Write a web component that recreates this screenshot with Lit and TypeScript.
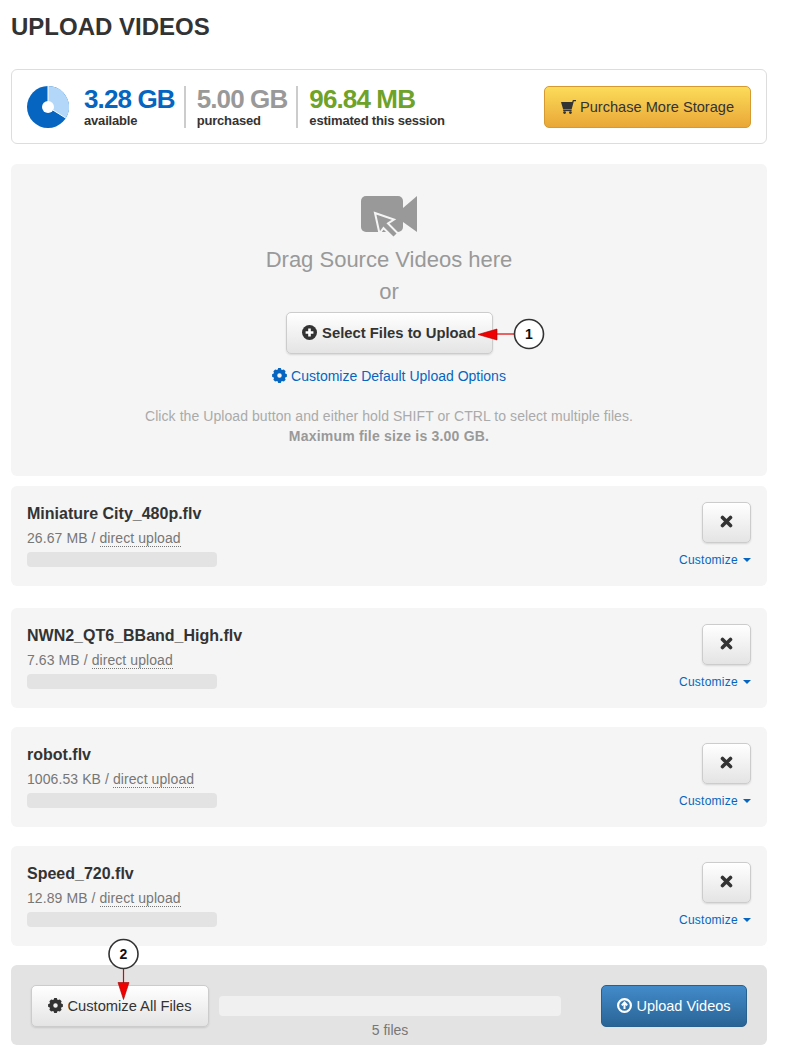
import { LitElement, html, css, svg } from "lit";
import { customElement } from "lit/decorators.js";

function gearPath(): string {
  const pts: string[] = [];
  const teeth = 8;
  for (let i = 0; i < teeth; i++) {
    const a = (i / teeth) * Math.PI * 2 - Math.PI / 2;
    const s = Math.PI / teeth;
    const p = [
      [6.3, a - s * 0.95],
      [8, a - s * 0.42],
      [8, a + s * 0.42],
      [6.3, a + s * 0.95],
    ];
    for (const [r, t] of p) {
      pts.push(`${(8 + r * Math.cos(t)).toFixed(2)} ${(8 + r * Math.sin(t)).toFixed(2)}`);
    }
  }
  return `M${pts.join("L")}Z M8 5.6A2.4 2.4 0 1 0 8 10.4A2.4 2.4 0 1 0 8 5.6Z`;
}
const GEAR = gearPath();
const gear = (cls: string) => html`<svg class=${cls} viewBox="0 0 16 16"><path fill="currentColor" fill-rule="evenodd" d=${GEAR}></path></svg>`;

const FILES = [
  { name: "Miniature City_480p.flv", size: "26.67 MB", cls: "r1" },
  { name: "NWN2_QT6_BBand_High.flv", size: "7.63 MB", cls: "r2" },
  { name: "robot.flv", size: "1006.53 KB", cls: "r2" },
  { name: "Speed_720.flv", size: "12.89 MB", cls: "r2" },
];

@customElement("app-root")
export class AppRoot extends LitElement {
  static styles = css`
    :host {
      display: block;
      position: relative;
      width: 787px;
      height: 1058px;
      box-sizing: border-box;
      padding: 0 20px 0 11px;
      background: #fff;
      font-family: "Liberation Sans", Arial, sans-serif;
      color: #333;
      overflow: hidden;
    }
    h1 {
      margin: 0;
      height: 69px;
      padding-top: 14px;
      box-sizing: border-box;
      font-size: 24px;
      line-height: 26px;
      font-weight: 700;
      color: #333;
    }
    .stats {
      height: 75px;
      box-sizing: border-box;
      border: 1px solid #ddd;
      border-radius: 6px;
      display: flex;
      align-items: center;
      padding: 0 15px;
      margin-bottom: 20px;
    }
    .donut { width: 42px; height: 42px; flex: none; margin-right: 15px; }
    .stat { display: flex; flex-direction: column; height: 42px; }
    .stat b {
      font-size: 26px;
      line-height: 27px;
      letter-spacing: -0.88px;
      font-weight: 700;
    }
    .stat span {
      font-size: 13px;
      line-height: 15px;
      font-weight: 700;
      letter-spacing: -0.18px;
      color: #333;
    }
    .sep { width: 2px; height: 42px; background: #ccc; margin: 0 11px 0 9px; flex: none; }
    .blue { color: #0565c0; }
    .grey { color: #999; }
    .green { color: #6ea229; }
    .btn {
      display: inline-flex;
      align-items: center;
      justify-content: center;
      box-sizing: border-box;
      border-radius: 5px;
      border: 1px solid #ccc;
      background: linear-gradient(#fff, #e4e4e4);
      box-shadow: 0 1px 2px rgba(0, 0, 0, 0.12);
      color: #333;
      font-family: inherit;
      font-size: 14px;
      padding: 0;
    }
    .buy {
      margin-left: auto;
      width: 207px;
      height: 42px;
      background: linear-gradient(#fcdc59, #e9a737);
      border-color: #d59a30;
      gap: 4px;
      box-shadow: none;
      font-size: 14.6px;
    }
    .buy svg { width: 15px; height: 14px; }
    .drop {
      height: 312px;
      background: #f5f5f5;
      border-radius: 6px;
      display: flex;
      flex-direction: column;
      align-items: center;
      padding-top: 31px;
      box-sizing: border-box;
      margin-bottom: 10px;
    }
    .cam { width: 56px; height: 46px; margin-bottom: 3px; display: block; }
    .drag { font-size: 22px; line-height: 32px; color: #999; }
    .sel {
      width: 207px;
      height: 42px;
      margin-top: 4px;
      font-weight: 700;
      font-size: 14.8px;
      gap: 5px;
    }
    .sel svg { width: 15px; height: 15px; position: relative; top: -1px; }
    .def {
      margin-top: 13px;
      font-size: 14px;
      line-height: 18px;
      color: #0565c0;
      display: flex;
      align-items: center;
      gap: 4px;
    }
    .gear14 { width: 15px; height: 15px; position: relative; top: -1px; }
    .help {
      margin-top: 21px;
      font-size: 14px;
      line-height: 20px;
      letter-spacing: 0.07px;
      color: #aaa;
      text-align: center;
    }
    .help b { color: #999; letter-spacing: 0.2px; }
    .row {
      height: 100px;
      box-sizing: border-box;
      background: #f5f5f5;
      border-radius: 6px;
      padding: 16px;
      display: flex;
      justify-content: space-between;
    }
    .r1 { margin-bottom: 22px; }
    .r2 { margin-bottom: 19px; }
    .name { font-size: 16px; font-weight: 700; line-height: 22px; color: #333; margin-top: 1px; }
    .meta { font-size: 14px; line-height: 18px; color: #777; margin-top: 4px; letter-spacing: 0.08px; }
    .meta u { text-decoration: none; border-bottom: 1px dotted #777; }
    .bar { width: 190px; height: 15px; border-radius: 4px; background: #e3e3e3; margin-top: 5px; }
    .side { display: flex; flex-direction: column; align-items: flex-end; }
    .x { width: 49px; height: 41px; }
    .x svg { width: 13px; height: 13px; position: relative; top: -1px; }
    .cust {
      font-size: 12px;
      line-height: 14px;
      margin-top: 10px;
      letter-spacing: 0.26px;
      color: #0565c0;
      display: flex;
      align-items: center;
      gap: 5px;
    }
    .cust svg { width: 8px; height: 4px; }
    .foot {
      height: 80px;
      box-sizing: border-box;
      background: #e3e3e3;
      border-radius: 6px;
      padding: 20px;
      display: flex;
      align-items: flex-start;
    }
    .all { width: 178px; height: 42px; gap: 4px; font-size: 14.7px; flex: none; }
    .mid { width: 342px; margin: 11px 40px 0 10px; flex: none; text-align: center; }
    .mid div { height: 20px; background: #f0f0f0; border-radius: 4px; }
    .mid span { display: block; font-size: 14px; line-height: 18px; color: #777; margin-top: 5px; }
    .up {
      width: 146px;
      height: 42px;
      flex: none;
      gap: 4px;
      border-color: #28608f;
      color: #fff;
      font-size: 14.5px;
      background: linear-gradient(#428bca, #2a6496);
      box-shadow: none;
    }
    .up svg { width: 15px; height: 15px; position: relative; top: -1px; }
    .notes { position: absolute; left: 0; top: 0; width: 787px; height: 1058px; pointer-events: none; }
    .notes text { font-family: "Liberation Sans", Arial, sans-serif; font-size: 14px; font-weight: 700; fill: #111; text-anchor: middle; }
  `;

  private row(f: { name: string; size: string; cls: string }) {
    return html`<div class="row ${f.cls}">
      <div>
        <div class="name">${f.name}</div>
        <div class="meta">${f.size} / <u>direct upload</u></div>
        <div class="bar"></div>
      </div>
      <div class="side">
        <button class="btn x"><svg viewBox="0 0 13 13"><path d="M2.5 2.5L10.5 10.5M10.5 2.5L2.5 10.5" stroke="#333" stroke-width="3.6" stroke-linecap="round" fill="none"></path></svg></button>
        <div class="cust">Customize <svg viewBox="0 0 8 4"><path d="M0 0H8L4 4Z" fill="#0565c0"></path></svg></div>
      </div>
    </div>`;
  }

  render() {
    return html`
      <h1>UPLOAD VIDEOS</h1>
      <div class="stats">
        <svg class="donut" viewBox="0 0 42 42">
          <circle cx="21" cy="21" r="21" fill="#0565c0"></circle>
          <path d="M21 21L21 0A21 21 0 0 1 38.8 32.1Z" fill="#b2d7f8"></path>
          <path d="M21 21L21 0M21 21L38.8 32.1" stroke="#fff" stroke-width="1"></path>
          <circle cx="21" cy="21" r="6" fill="#fff"></circle>
        </svg>
        <div class="stat"><b class="blue">3.28 GB</b><span>available</span></div>
        <div class="sep"></div>
        <div class="stat"><b class="grey">5.00 GB</b><span>purchased</span></div>
        <div class="sep"></div>
        <div class="stat"><b class="green">96.84 MB</b><span>estimated this session</span></div>
        <button class="btn buy">
          <svg viewBox="0 0 15 14"><path fill="#333" d="M0 2H11.2L11.9 0H15V1.2H12.8L10.6 9.4H2.2L0 2Z"></path><rect x="2.2" y="10" width="8.4" height="1.1" fill="#333"></rect><circle cx="3.6" cy="12.6" r="1.4" fill="#333"></circle><circle cx="9.4" cy="12.6" r="1.4" fill="#333"></circle></svg>
          Purchase More Storage
        </button>
      </div>
      <div class="drop">
        <svg class="cam" viewBox="0 0 56 46">
          <rect x="0" y="1" width="42" height="36" rx="5" fill="#999"></rect>
          <path d="M42 13L56 1V37L42 27Z" fill="#999"></path>
          <path d="M14 18L33 24.5L27 28.5L37 38.5L32.5 43L22.5 33L18.5 38.5Z" fill="#999" stroke="#f5f5f5" stroke-width="2"></path>
        </svg>
        <div class="drag">Drag Source Videos here</div>
        <div class="drag">or</div>
        <button class="btn sel">
          <svg viewBox="0 0 15 15"><circle cx="7.5" cy="7.5" r="7.5" fill="#333"></circle><path d="M7.5 3.6V11.4M3.6 7.5H11.4" stroke="#fff" stroke-width="2.6"></path></svg>
          Select Files to Upload
        </button>
        <div class="def">${gear("gear14")}Customize Default Upload Options</div>
        <div class="help">Click the Upload button and either hold SHIFT or CTRL to select multiple files.<br /><b>Maximum file size is 3.00 GB.</b></div>
      </div>
      ${FILES.map((f) => this.row(f))}
      <div class="foot">
        <button class="btn all">${gear("gear14")}Customize All Files</button>
        <div class="mid"><div></div><span>5 files</span></div>
        <button class="btn up">
          <svg viewBox="0 0 15 15"><circle cx="7.5" cy="7.5" r="6.4" fill="none" stroke="#fff" stroke-width="2.2"></circle><path d="M7.5 11V5M4.8 7.4L7.5 4.4L10.2 7.4" fill="none" stroke="#fff" stroke-width="2"></path></svg>
          Upload Videos
        </button>
      </div>
      <svg class="notes" viewBox="0 0 787 1058">
        ${svg`
          <path d="M514 334H495" stroke="#e00000" stroke-width="1.2"></path>
          <path d="M478 334.5L497 329V340Z" fill="#f00000" stroke="#a00000" stroke-width="0.6"></path>
          <circle cx="529" cy="334" r="14.5" fill="#fff" stroke="#333" stroke-width="1.6"></circle>
          <text x="529" y="339">1</text>
          <path d="M123.5 969V983" stroke="#e00000" stroke-width="1.2"></path>
          <path d="M123.5 999.5L118 982.5H129Z" fill="#f00000" stroke="#a00000" stroke-width="0.6"></path>
          <circle cx="123.5" cy="954" r="14.5" fill="#fff" stroke="#333" stroke-width="1.6"></circle>
          <text x="123.5" y="959">2</text>
        `}
      </svg>
    `;
  }
}
